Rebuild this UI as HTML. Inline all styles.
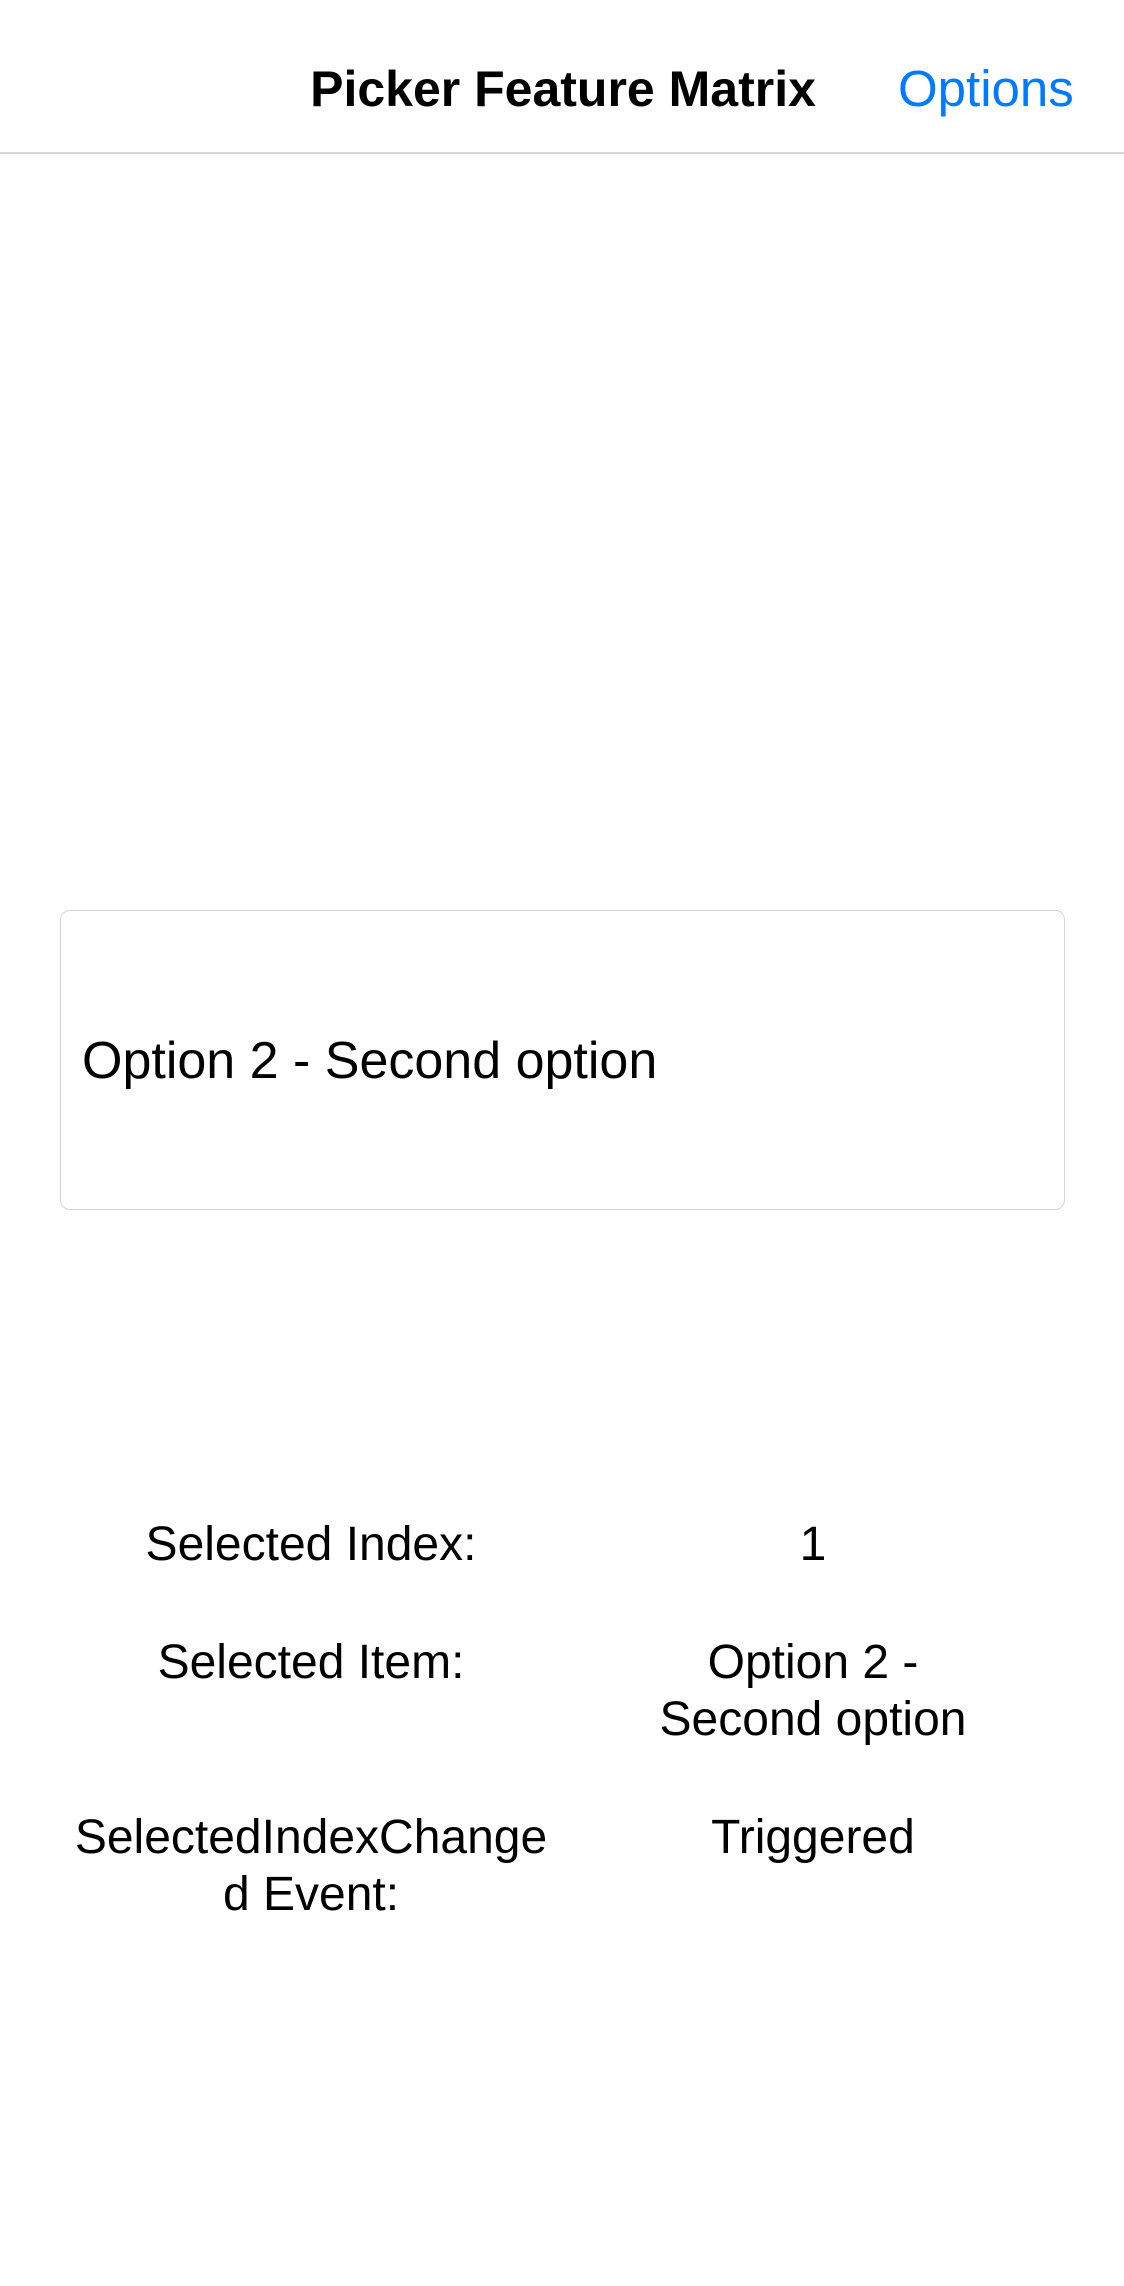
<!DOCTYPE html>
<html><head><style>
body{margin:0;width:1124px;height:2286px;background:#fff;font-family:"Liberation Sans",sans-serif;position:relative;overflow:hidden;color:#000}
.a{position:absolute;white-space:nowrap}
.c{transform:translateX(-50%);text-align:center}
.t{font-size:48px;line-height:57px}
</style></head><body>
<div class="a c" style="left:563px;top:61px;font-size:50px;font-weight:bold;line-height:56px">Picker Feature Matrix</div>
<div class="a" style="left:898px;top:61px;font-size:51px;color:#007aff;line-height:56px">Options</div>
<div class="a" style="left:0;top:152px;width:1124px;height:2px;background:#d6d6d6"></div>
<div class="a" style="left:60px;top:910px;width:1003px;height:298px;border:1px solid #d4d4d4;border-radius:10px"></div>
<div class="a" style="left:82px;top:1031px;font-size:52px;line-height:60px">Option 2 - Second option</div>
<div class="a c t" style="left:311px;top:1516px">Selected Index:</div>
<div class="a c t" style="left:813px;top:1516px">1</div>
<div class="a c t" style="left:311px;top:1634px">Selected Item:</div>
<div class="a c t" style="left:813px;top:1634px">Option 2 -<br>Second option</div>
<div class="a c t" style="left:311px;top:1809px">SelectedIndexChange<br>d Event:</div>
<div class="a c t" style="left:813px;top:1809px">Triggered</div>
</body></html>
